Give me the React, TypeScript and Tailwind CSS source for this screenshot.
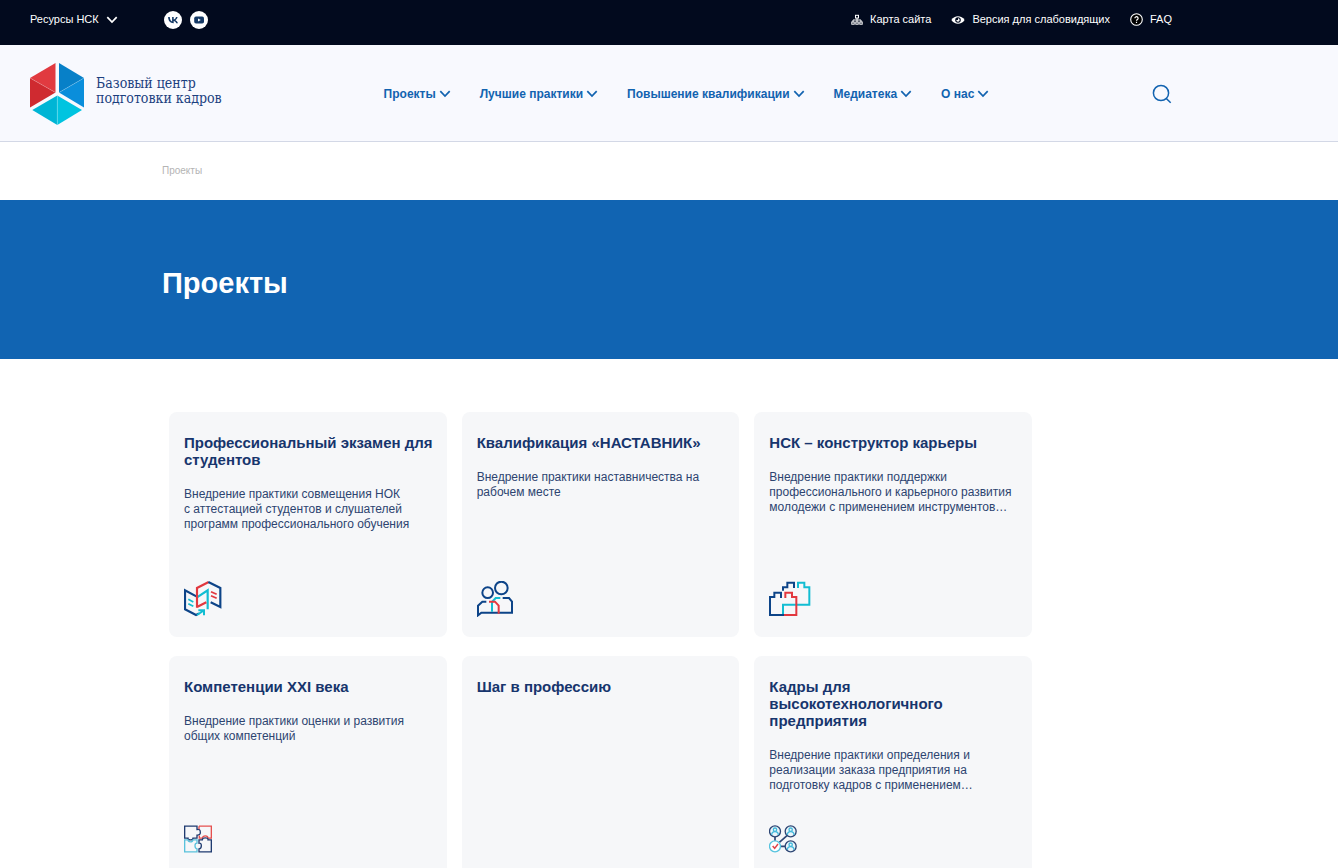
import type { ReactNode } from "react";

const Chevron = () => (
  <svg className="h-2 w-[10px] shrink-0 overflow-visible" viewBox="0 0 10 8" fill="none" stroke="currentColor" strokeWidth="1.7">
    <path d="M0.3 1.2 5 6 9.7 1.2" />
  </svg>
);

const Logo = () => (
  <svg className="h-[62px] w-[54px] shrink-0" viewBox="0 0 54 62">
    <path d="M0 15 25.5 0V29.5Z" fill="#e13a40" />
    <path d="M0 15 25.5 29.5 0 44.5Z" fill="#cf2a30" />
    <path d="M29 0 54 15 29 29.5Z" fill="#0780c8" />
    <path d="M54 15V44.5L29 29.5Z" fill="#0a8edb" />
    <path d="M27.3 32.5V62L2.3 47Z" fill="#00b5d5" />
    <path d="M27.3 32.5 52 47 27.3 62Z" fill="#00c4e0" />
    <path d="M0 15 25.5 29.5M54 15 29 29.5M27.3 32.5V62" stroke="#fff" strokeOpacity=".35" strokeWidth=".6" />
  </svg>
);

const SitemapIcon = () => (
  <svg className="h-3 w-3" viewBox="0 0 12 12" fill="none" stroke="currentColor" strokeWidth="1">
    <rect x="4.5" y="1.3" width="3" height="2.7" />
    <rect x=".8" y="8" width="2.4" height="2.2" />
    <rect x="4.8" y="8" width="2.4" height="2.2" />
    <rect x="8.8" y="8" width="2.4" height="2.2" />
    <path d="M6 4v4M2 8V6h8v2" />
  </svg>
);

const EyeIcon = () => (
  <svg className="h-3 w-[14px]" viewBox="0 0 14 12">
    <path d="M.4 6C2 3.4 4.400 2.200 7 2.200S12 3.400 13.600 6C12 8.600 9.600 9.800 7 9.800S2 8.600.4 6Z" fill="currentColor" />
    <circle cx="7" cy="6" r="2.800" fill="#020a1e" />
    <path d="M7 4.300A1.700 1.700 0 1 1 5.300 6H7Z" fill="currentColor" />
  </svg>
);

const HelpIcon = () => (
  <svg className="h-[13px] w-[13px]" viewBox="0 0 13 13" fill="none" stroke="currentColor" strokeWidth="1.1">
    <circle cx="6.500" cy="6.500" r="5.800" fill="#000" />
    <path d="M4.900 5.300a1.600 1.600 0 1 1 2.500 1.300c-.6.4-.9.600-.9 1.200M6.500 8.700v1.200" strokeWidth="1.200" />
  </svg>
);

const VkIcon = () => (
  <svg className="h-[18px] w-[18px]" viewBox="0 0 18 18">
    <circle cx="9" cy="9" r="9" fill="#fff" />
    <path
      d="M9.500 12.300C6.200 12.300 4.200 10 4.100 6.100h1.700c.1 2.900 1.300 4.100 2.300 4.300V6.100h1.600v2.500c1-.1 2-1.200 2.300-2.500h1.600c-.3 1.500-1.300 2.600-2.100 3.100.8.400 2 1.300 2.500 3.100h-1.800c-.4-1.200-1.300-2.100-2.500-2.200v2.200Z"
      fill="#163a66"
    />
  </svg>
);

const YoutubeIcon = () => (
  <svg className="h-[18px] w-[18px]" viewBox="0 0 18 18">
    <circle cx="9" cy="9" r="9" fill="#fff" />
    <rect x="4.200" y="5.500" width="9.800" height="7" rx="1.800" fill="#163a66" />
    <path d="M8 7.500 10.800 9 8 10.500Z" fill="#fff" />
  </svg>
);

const SearchIcon = () => (
  <svg className="h-5 w-5" viewBox="0 0 20 20" fill="none" stroke="currentColor" strokeWidth="1.500">
    <circle cx="9" cy="9" r="7.600" />
    <path d="M14.300 14.500 18.700 18.800" />
  </svg>
);

const navy = "#0d4488";
const red = "#e2383f";
const cyan = "#12bdd2";

const BooksIcon = () => (
  <svg className="h-9 w-[38px]" viewBox="27 33 114 108" fill="none" strokeWidth="6.500">
    <path d="M64 79 30 61V118L63 135 72 130" stroke={navy} />
    <path d="M66 82 98 61V118" stroke={cyan} />
    <path d="M66 113V54L101 36M66 111 94 97" stroke={red} />
    <path d="M100 36 136 54V111L107 97" stroke={navy} />
    <path d="M40 88 55 96M40 101 55 109" stroke={cyan} strokeWidth="5" />
    <path d="M108 65 125 73M108 77 125 85" stroke={red} strokeWidth="5" />
    <path d="M66 135 84 123M70 121H87V136" stroke={cyan} strokeWidth="6" />
  </svg>
);

const PeopleIcon = () => (
  <svg className="h-9 w-9" viewBox="30 32 108 108" fill="none" strokeWidth="6">
    <circle cx="62" cy="67" r="16" stroke={navy} />
    <circle cx="103" cy="53" r="19" stroke={navy} />
    <path d="M58 94H46L33 106V135L43 127H135V94L126 83H107" stroke={navy} />
    <path d="M100 83H86L75 95V124" stroke={cyan} />
    <path d="M66 94H84L95 106V130" stroke={red} />
  </svg>
);

const BlocksIcon = () => (
  <svg className="h-9 w-[42px]" viewBox="27 33 126 108" fill="none" strokeWidth="6">
    <path d="M69 62V52H82V38H102V54" stroke={navy} />
    <path d="M114 54V38H133V52H148V104H69V134" stroke={cyan} />
    <path d="M63 84V68H43V81H30V135H72" stroke={navy} />
    <path d="M76 84V68H96V81H109V135H72" stroke={red} />
  </svg>
);

const PuzzleIcon = () => (
  <svg className="h-7 w-7" viewBox="27 33 84 81" fill="none" strokeWidth="4">
    <path d="M29 35H66V45Q76 43 76 53T66 62V71H54Q54 76 46 76T39 71H29Z" stroke="#1f3b70" />
    <path d="M72 35H109V71H99Q99 64 91 64T82 71H73V63M72 35V44" stroke="#e5504f" />
    <path d="M29 76H39Q39 82 46 82T54 76H66V86Q60 86 60 94T66 103V112H29Z" stroke="#59c2dc" />
    <path d="M72 76H82Q82 70 91 70T99 76H109V112H72V103Q79 103 79 94T72 86Z" stroke="#1f3b70" />
  </svg>
);

const Person = ({ x, y }: { x: number; y: number }) => (
  <g strokeWidth="4">
    <circle cx={x} cy={y} r="16.500" stroke="#2d4674" fill="#eaf5fa" />
    <circle cx={x} cy={y - 5} r="5" stroke="#44b9dc" />
    <path d={`M${x - 10} ${y + 11}q0-10 10-10t10 10`} stroke="#44b9dc" />
  </g>
);

const NetworkIcon = () => (
  <svg className="h-7 w-7" viewBox="27 32 84 84" fill="none">
    <path d="M45 67V80M81 64 58 84M62 96H76" stroke="#2d4674" strokeWidth="5" />
    <Person x={45} y={51} />
    <Person x={92} y={51} />
    <Person x={92} y={96} />
    <circle cx="45" cy="96" r="16.500" stroke="#55c3df" strokeWidth="4" fill="#fff" />
    <path d="M38 95 44 102 54 89" stroke="#e0444a" strokeWidth="4.500" />
  </svg>
);

type Project = { title: string; text?: string; icon?: ReactNode };

const projects: Project[] = [
  {
    title: "Профессиональный экзамен для студентов",
    text: "Внедрение практики совмещения НОК с\u00a0аттестацией студентов и слушателей программ профессионального обучения",
    icon: <BooksIcon />,
  },
  {
    title: "Квалификация «НАСТАВНИК»",
    text: "Внедрение практики наставничества на рабочем месте",
    icon: <PeopleIcon />,
  },
  {
    title: "НСК – конструктор карьеры",
    text: "Внедрение практики поддержки профессионального и карьерного развития молодежи с применением инструментов…",
    icon: <BlocksIcon />,
  },
  {
    title: "Компетенции XXI века",
    text: "Внедрение практики оценки и развития общих компетенций",
    icon: <PuzzleIcon />,
  },
  { title: "Шаг в профессию" },
  {
    title: "Кадры для высокотехнологичного предприятия",
    text: "Внедрение практики определения и реализации заказа предприятия на подготовку кадров с применением…",
    icon: <NetworkIcon />,
  },
];

const menu = ["Проекты", "Лучшие практики", "Повышение квалификации", "Медиатека", "О нас"];

export default function App() {
  return (
    <div className="min-h-screen bg-white font-['Liberation_Sans',Arial,sans-serif]">
      <div className="flex h-[45px] items-center justify-between bg-[#020a1e] pr-[166px] pb-[6px] pl-[30px] text-[11px] text-white">
        <div className="flex items-center">
          <button type="button" className="flex w-[134px] items-center gap-2">
            Ресурсы НСК <Chevron />
          </button>
          <div className="flex gap-2">
            <a href="#vk" aria-label="VK">
              <VkIcon />
            </a>
            <a href="#youtube" aria-label="YouTube">
              <YoutubeIcon />
            </a>
          </div>
        </div>
        <div className="flex items-center gap-5">
          <a href="#map" className="flex items-center gap-[7px]">
            <SitemapIcon /> Карта сайта
          </a>
          <a href="#accessible" className="flex items-center gap-[7px]">
            <EyeIcon /> Версия для слабовидящих
          </a>
          <a href="#faq" className="flex items-center gap-[7px]">
            <HelpIcon /> FAQ
          </a>
        </div>
      </div>

      <header className="flex h-[97px] items-center justify-between border-b border-[#d3d8e6] bg-[#f8f9fe] pt-[2px] pr-[166px] pl-[30px] text-[#1263b0]">
        <a href="#home" className="flex w-[190px] items-center gap-3">
          <Logo />
          <span className="flex flex-col pb-[6px] font-['DejaVu_Serif_Condensed','DejaVu_Serif',serif] text-[14px] leading-[15px] whitespace-nowrap text-[#1b3f7f]">
            <span>Базовый центр</span>
            <span>подготовки кадров</span>
          </span>
        </a>
        <nav className="flex gap-[30px]">
          {menu.map((item) => (
            <button key={item} type="button" className="flex items-center gap-1 text-[12px] font-bold whitespace-nowrap">
              {item} <Chevron />
            </button>
          ))}
        </nav>
        <button type="button" aria-label="Поиск">
          <SearchIcon />
        </button>
      </header>

      <div className="flex h-[58px] items-center px-[162px] pb-[2px] text-[10px] text-[#b4b4b4]">Проекты</div>

      <div className="flex h-[159px] items-center bg-[#1164b2] px-[162px] pt-[7px]">
        <h1 className="text-[29px] leading-9 font-bold text-white">Проекты</h1>
      </div>

      <main className="px-[169px] pt-[53px] pb-12">
        <div className="grid max-w-[863px] grid-cols-3 gap-x-[15px] gap-y-[19px]">
          {projects.map((p) => (
            <article key={p.title} className="flex min-h-[225px] flex-col rounded-lg bg-[#f6f7f9] pt-[22px] pr-2 pb-5 pl-[15px]">
              <h2 className="text-[15px] leading-[17px] font-bold text-[#17356d]">{p.title}</h2>
              {p.text && <p className="mt-[19px] text-[12px] leading-[15px] text-[#2d4470]">{p.text}</p>}
              <div className="mt-auto h-9">{p.icon}</div>
            </article>
          ))}
        </div>
      </main>
    </div>
  );
}
